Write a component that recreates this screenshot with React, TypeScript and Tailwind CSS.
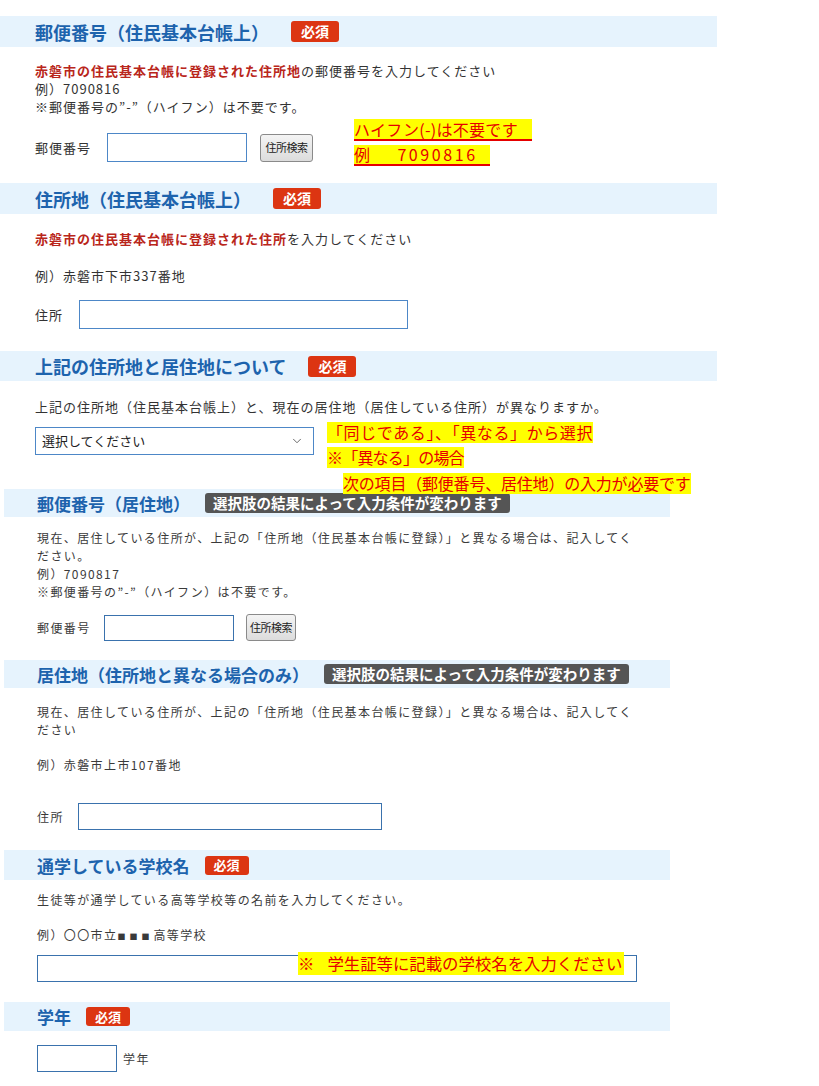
import { ChevronDown } from 'lucide-react';

const jp = "font-['Noto_Sans_CJK_JP','Noto_Sans',sans-serif]";

function Required({ small = false }: { small?: boolean }) {
  return (
    <span
      className={`inline-flex items-center justify-center rounded-[3px] bg-[#dc3512] font-bold text-white ${
        small ? 'h-[19px] w-[44px] text-[13px]' : 'h-[21px] w-[48px] text-[14px]'
      }`}
    >
      必須
    </span>
  );
}

function Conditional() {
  return (
    <span className="inline-flex h-[20px] items-center rounded-[3px] bg-[#555555] px-[8px] text-[14.5px] font-bold leading-none text-white">
      選択肢の結果によって入力条件が変わります
    </span>
  );
}

function UpperHeader({ title, className = '' }: { title: string; className?: string }) {
  return (
    <div className={`flex items-center gap-[22px] bg-[#e6f3fd] pl-[35px] ${className}`}>
      <h2 className="text-[18px] font-bold leading-none text-[#1d63ad]">{title}</h2>
      <Required />
    </div>
  );
}

function LowerHeader({
  title,
  conditional = false,
  className = '',
}: {
  title: string;
  conditional?: boolean;
  className?: string;
}) {
  return (
    <div className={`flex items-center gap-[15px] bg-[#e6f3fd] pl-[33px] ${className}`}>
      <h2 className="text-[17px] font-bold leading-none text-[#1d63ad]">{title}</h2>
      {conditional ? <Conditional /> : <Required small />}
    </div>
  );
}

function Note({ children, className = '' }: { children: React.ReactNode; className?: string }) {
  return (
    <span
      className={`inline-block self-start whitespace-nowrap bg-[#ffff00] text-[16px] text-[#e60000] ${className}`}
    >
      {children}
    </span>
  );
}

function SearchButton({ className = '' }: { className?: string }) {
  return (
    <button
      className={`rounded-[3px] border border-[#8a8a8a] bg-gradient-to-b from-[#f4f4f4] to-[#dcdcdc] text-[11px] tracking-[-0.5px] text-[#222] ${className}`}
    >
      住所検索
    </button>
  );
}

const red = 'font-bold text-[#b9261b]';

export default function App() {
  return (
    <div className={`min-h-[1086px] w-[819px] bg-white pt-[16px] ${jp}`}>
      {/* 郵便番号（住民基本台帳上） */}
      <UpperHeader title="郵便番号（住民基本台帳上）" className="h-[31px] w-[717px]" />
      <div className="mt-[15px] pl-[35px] text-[13px] leading-[18px] tracking-[1px] text-[#333]">
        <p>
          <span className={red}>赤磐市の住民基本台帳に登録された住所地</span>の郵便番号を入力してください
        </p>
        <p>例）7090816</p>
        <p>※郵便番号の”-”（ハイフン）は不要です。</p>
      </div>
      <div className="relative mt-[17px] flex h-[29px] items-center pl-[35px]">
        <span className="w-[72px] text-[13px] tracking-[1px] text-[#333]">郵便番号</span>
        <input className="h-[29px] w-[140px] border border-[#4d87c7] bg-white outline-none" />
        <SearchButton className="ml-[13px] h-[28px] w-[53px]" />
        <div className="absolute left-[354px] top-[-14px] flex flex-col gap-[4px]">
          <Note className="h-[22px] border-b-2 border-[#e60000] pr-[14px] leading-[20px] tracking-[0.3px]">ハイフン(-)は不要です</Note>
          <Note className="h-[21px] border-b-2 border-[#e60000] pr-[12px] leading-[19px] tracking-[2.6px]">例　 7090816</Note>
        </div>
      </div>

      {/* 住所地（住民基本台帳上） */}
      <UpperHeader title="住所地（住民基本台帳上）" className="mt-[21px] h-[31px] w-[717px]" />
      <div className="pl-[35px] text-[13px] leading-[18px] tracking-[1px] text-[#333]">
        <p className="mt-[16px]">
          <span className={red}>赤磐市の住民基本台帳に登録された住所</span>を入力してください
        </p>
        <p className="mt-[19px]">例）赤磐市下市337番地</p>
      </div>
      <div className="mt-[15px] flex h-[29px] items-center pl-[35px]">
        <span className="w-[44px] text-[13px] tracking-[1px] text-[#333]">住所</span>
        <input className="h-[29px] w-[329px] border border-[#4d87c7] bg-white outline-none" />
      </div>

      {/* 上記の住所地と居住地について */}
      <UpperHeader title="上記の住所地と居住地について" className="mt-[22px] h-[30px] w-[717px]" />
      <p className="mt-[17px] pl-[35px] text-[13px] leading-[18px] tracking-[1px] text-[#333]">
        上記の住所地（住民基本台帳上）と、現在の居住地（居住している住所）が異なりますか。
      </p>
      <div className="relative mt-[11px] flex h-[28px] items-center pl-[35px]">
        <div className="flex h-[28px] w-[279px] items-center justify-between border border-[#4d87c7] bg-white pl-[6px] pr-[9px]">
          <span className="text-[13px] text-[#222]">選択してください</span>
          <ChevronDown className="h-[14px] w-[14px] text-[#555]" strokeWidth={1.5} />
        </div>
        <div className="absolute left-[327px] top-[-5px] z-10 flex flex-col gap-[4px]">
          <Note className="h-[21px] leading-[21px] tracking-[0.6px]">「同じである」、「異なる」から選択</Note>
          <Note className="h-[21px] leading-[21px] tracking-[-0.8px]">※「異なる」の場合</Note>
          <Note className="ml-[16px] mt-[1px] h-[21px] leading-[21px] tracking-[-0.2px]">次の項目（郵便番号、居住地）の入力が必要です</Note>
        </div>
      </div>

      <div className="mt-[34px] w-[670px] pl-[4px]">
        {/* 郵便番号（居住地） */}
        <LowerHeader title="郵便番号（居住地）" conditional className="h-[28px]" />
        <div className="mt-[12px] pl-[33px] text-[12px] leading-[18px] tracking-[1.4px] text-[#3a3a3a]">
          <p>
            現在、居住している住所が、上記の「住所地（住民基本台帳に登録）」と異なる場合は、記入してく
            <br />
            ださい。
          </p>
          <p>例）7090817</p>
          <p>※郵便番号の”-”（ハイフン）は不要です。</p>
        </div>
        <div className="mt-[13px] flex h-[27px] items-center pl-[33px]">
          <span className="w-[67px] text-[12px] tracking-[1.4px] text-[#3a3a3a]">郵便番号</span>
          <input className="h-[26px] w-[130px] border border-[#3a72ad] bg-white outline-none" />
          <SearchButton className="ml-[12px] h-[27px] w-[50px]" />
        </div>

        {/* 居住地（住所地と異なる場合のみ） */}
        <LowerHeader title="居住地（住所地と異なる場合のみ）" conditional className="mt-[19px] h-[28px]" />
        <div className="pl-[33px] text-[12px] leading-[18px] tracking-[1.4px] text-[#3a3a3a]">
          <p className="mt-[15px]">
            現在、居住している住所が、上記の「住所地（住民基本台帳に登録）」と異なる場合は、記入してく
            <br />
            ださい
          </p>
          <p className="mt-[17px]">例）赤磐市上市107番地</p>
        </div>
        <div className="mt-[29px] flex h-[27px] items-center pl-[33px]">
          <span className="w-[41px] text-[12px] tracking-[1.4px] text-[#3a3a3a]">住所</span>
          <input className="h-[27px] w-[304px] border border-[#3a72ad] bg-white outline-none" />
        </div>

        {/* 通学している学校名 */}
        <LowerHeader title="通学している学校名" className="mt-[20px] h-[30px]" />
        <div className="pl-[33px] text-[12px] leading-[18px] tracking-[1.4px] text-[#3a3a3a]">
          <p className="mt-[11px]">生徒等が通学している高等学校等の名前を入力してください。</p>
          <p className="mt-[17px] h-[18px]">
            例）〇〇市立<span className="text-[8px] leading-none tracking-[4px]">■■■</span>高等学校
          </p>
        </div>
        <div className="relative mt-[11px] pl-[33px]">
          <input className="h-[27px] w-[600px] border border-[#3a72ad] bg-white outline-none" />
          <span className="absolute left-[294px] top-[-3px] inline-block h-[23px] whitespace-nowrap bg-[#ffff00] pr-[2px] text-[16.4px] leading-[23px] text-[#e60000]">
            ※<span className="ml-[13px]">学生証等に記載の学校名を入力ください</span>
          </span>
        </div>

        {/* 学年 */}
        <LowerHeader title="学年" className="mt-[20px] h-[29px]" />
        <div className="mt-[14px] flex h-[27px] items-center gap-[6px] pl-[33px]">
          <input className="h-[27px] w-[80px] border border-[#3a72ad] bg-white outline-none" />
          <span className="text-[12px] tracking-[1.4px] text-[#3a3a3a]">学年</span>
        </div>
      </div>
    </div>
  );
}
